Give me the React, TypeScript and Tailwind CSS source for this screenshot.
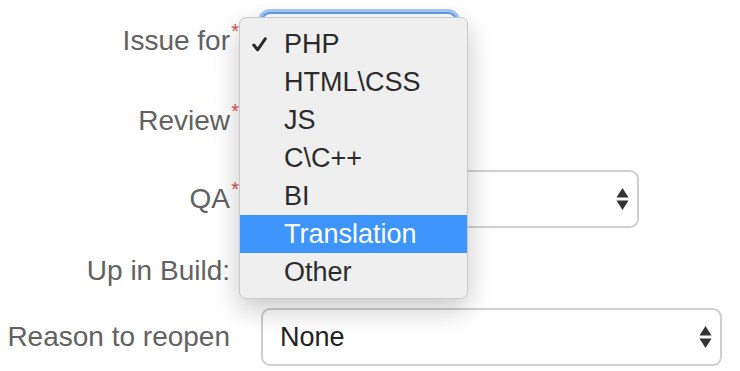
import type { ReactNode } from 'react';

const OPCIONES = ['PHP', 'HTML\\CSS', 'JS', 'C\\C++', 'BI', 'Translation', 'Other'];

function Flechas() {
  return (
    <svg width="13" height="24" viewBox="0 0 13 24" className="shrink-0">
      <path d="M6.5 1 L12.5 10.5 L0.5 10.5 Z" fill="#333" />
      <path d="M0.5 13.5 L12.5 13.5 L6.5 23 Z" fill="#333" />
    </svg>
  );
}

function Campo({ width, value, focused }: { width: string; value?: string; focused?: boolean }) {
  return (
    <div
      className={`flex h-[58px] ${width} items-center justify-between rounded-[9px] border-2 bg-white pl-[17px] pr-[8px] text-[27px] text-[#222] ${
        focused ? 'border-[#5f9ee9] shadow-[0_0_0_3px_#a6c8f3]' : 'border-[#cfcfcf]'
      }`}
    >
      <span>{value ?? ''}</span>
      <Flechas />
    </div>
  );
}

function Fila({ label, required, className, children }: { label: string; required?: boolean; className: string; children?: ReactNode }) {
  return (
    <div className={`flex h-[58px] items-center ${className}`}>
      <div className="w-[231px] pr-[1px] text-right text-[28px] text-[#626262]">
        <span className="relative">
          {label}
          {required && <span className="absolute -right-[9px] -top-[9px] text-[20px] text-[#d9534f]">*</span>}
        </span>
      </div>
      <div className="ml-[30px]">{children}</div>
    </div>
  );
}

export default function App() {
  const activo = 'Translation';
  return (
    <div className="relative h-[371px] w-[740px] overflow-hidden bg-white font-['Liberation_Sans',Arial,sans-serif]">
      <div className="flex flex-col">
        <Fila label="Issue for" required className="mt-[12px]">
          <Campo width="w-[196px]" focused />
        </Fila>
        <Fila label="Review" required className="mt-[22px]">
          <Campo width="w-[196px]" />
        </Fila>
        <Fila label="QA" required className="mt-[20px]">
          <Campo width="w-[378px]" />
        </Fila>
        <Fila label="Up in Build:" className="mt-[14px]" />
        <Fila label="Reason to reopen" className="mt-[8px]">
          <Campo width="w-[461px]" value="None" />
        </Fila>
      </div>

      <div className="absolute left-[239px] top-[17px] w-[229px] rounded-[7px] border border-[#c9c9c9] bg-[#efefef] py-[7px] shadow-[0_10px_28px_rgba(0,0,0,0.22)]">
        {OPCIONES.map((op, i) => (
          <div
            key={op}
            className={`relative flex h-[38px] items-center pl-[44px] text-[27px] ${
              op === activo ? 'bg-[#3d95fb] text-white' : 'text-[#2b2b2b]'
            }`}
          >
            {i === 0 && (
              <svg width="15" height="15" viewBox="0 0 15 15" className="absolute left-[12px] top-[12px]">
                <path d="M1.8 8 L5.6 12.8 L13.2 1.8" fill="none" stroke="#2b2b2b" strokeWidth="3" strokeLinecap="round" strokeLinejoin="round" />
              </svg>
            )}
            {op}
          </div>
        ))}
      </div>
    </div>
  );
}
